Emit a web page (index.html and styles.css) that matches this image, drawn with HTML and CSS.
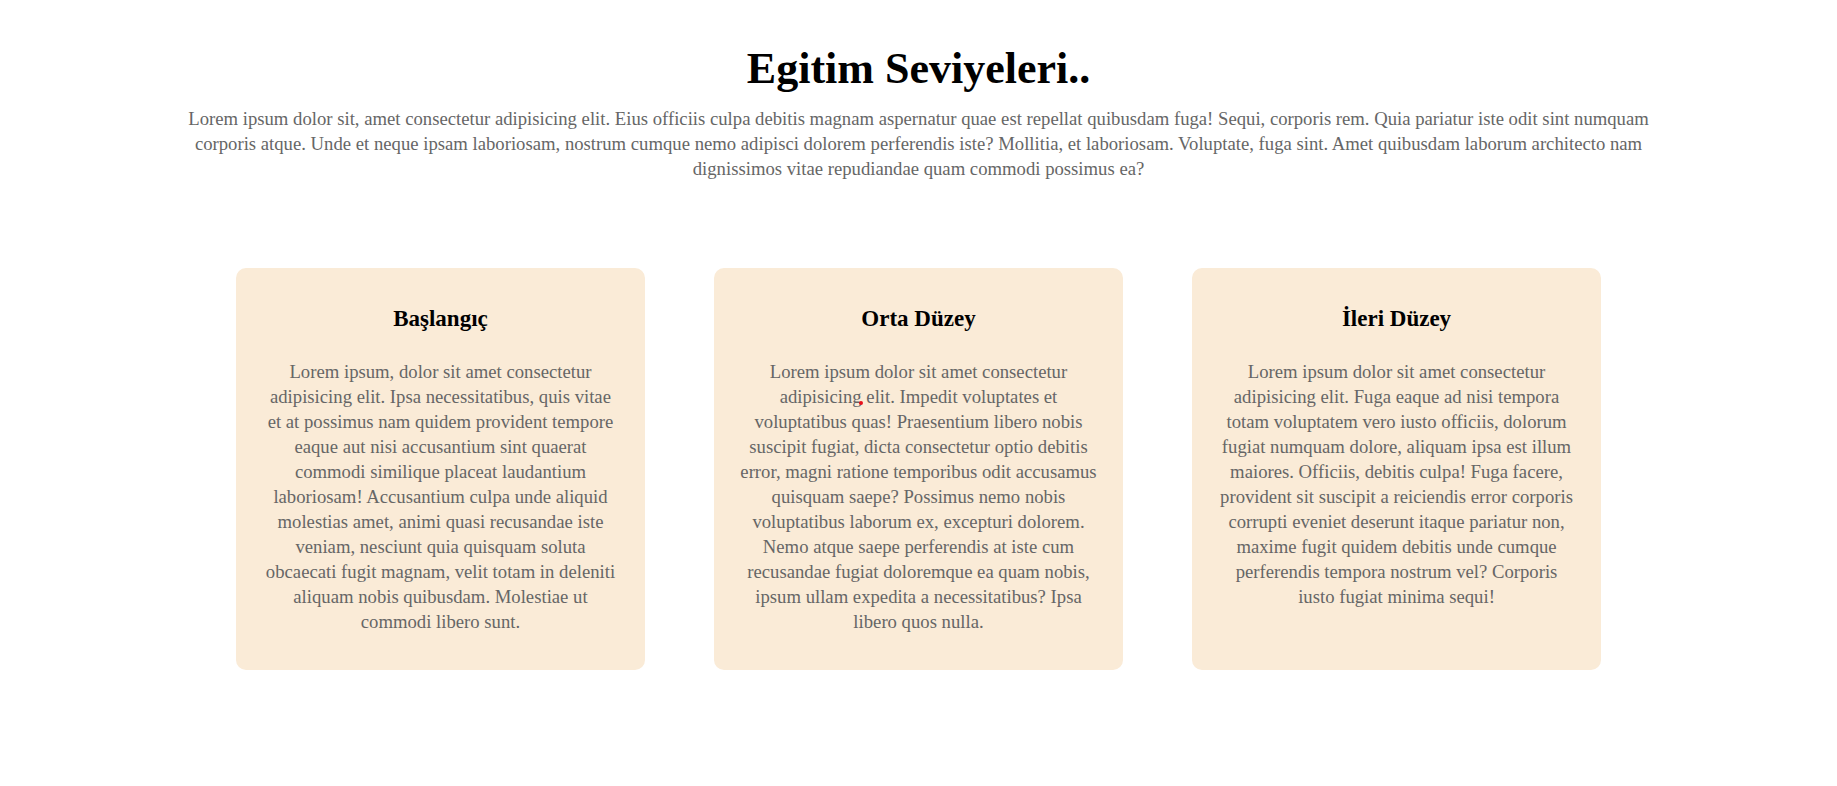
FILE: index.html
```html
<!DOCTYPE html>
<html lang="tr">
<head>
<meta charset="utf-8">
<title>Egitim Seviyeleri</title>
<link rel="stylesheet" href="styles.css">
</head>
<body>
<section class="intro">
  <h1 class="intro-title">Egitim Seviyeleri..</h1>
  <p class="intro-text">Lorem ipsum dolor sit, amet consectetur adipisicing elit. Eius officiis culpa debitis magnam aspernatur quae est repellat quibusdam fuga! Sequi, corporis rem. Quia pariatur iste odit sint numquam corporis atque. Unde et neque ipsam laboriosam, nostrum cumque nemo adipisci dolorem perferendis iste? Mollitia, et laboriosam. Voluptate, fuga sint. Amet quibusdam laborum architecto nam dignissimos vitae repudiandae quam commodi possimus ea?</p>
</section>
<section class="levels">
  <div class="card">
    <h2 class="card-title">Başlangıç</h2>
    <p class="card-text">Lorem ipsum, dolor sit amet consectetur adipisicing elit. Ipsa necessitatibus, quis vitae et at possimus nam quidem provident tempore eaque aut nisi accusantium sint quaerat commodi similique placeat laudantium laboriosam! Accusantium culpa unde aliquid molestias amet, animi quasi recusandae iste veniam, nesciunt quia quisquam soluta obcaecati fugit magnam, velit totam in deleniti aliquam nobis quibusdam. Molestiae ut commodi libero sunt.</p>
  </div>
  <div class="card card-marked">
    <h2 class="card-title">Orta Düzey</h2>
    <p class="card-text">Lorem ipsum dolor sit amet consectetur adipisicing elit. Impedit voluptates et voluptatibus quas! Praesentium libero nobis suscipit fugiat, dicta consectetur optio debitis error, magni ratione temporibus odit accusamus quisquam saepe? Possimus nemo nobis voluptatibus laborum ex, excepturi dolorem. Nemo atque saepe perferendis at iste cum recusandae fugiat doloremque ea quam nobis, ipsum ullam expedita a necessitatibus? Ipsa libero quos nulla.</p>
    <span class="cursor-dot"></span>
  </div>
  <div class="card">
    <h2 class="card-title">İleri Düzey</h2>
    <p class="card-text">Lorem ipsum dolor sit amet consectetur adipisicing elit. Fuga eaque ad nisi tempora totam voluptatem vero iusto officiis, dolorum fugiat numquam dolore, aliquam ipsa est illum maiores. Officiis, debitis culpa! Fuga facere, provident sit suscipit a reiciendis error corporis corrupti eveniet deserunt itaque pariatur non, maxime fugit quidem debitis unde cumque perferendis tempora nostrum vel? Corporis iusto fugiat minima sequi!</p>
  </div>
</section>
</body>
</html>
```

FILE: styles.css
```css
body {
  margin: 8px;
  font-family: "Liberation Serif", "Times New Roman", serif;
  background: #fff;
}

.intro {
  text-align: center;
  max-width: 1480px;
  margin: 0 auto;
}

.intro-title {
  font-size: 44px;
  font-weight: bold;
  color: #000;
  margin: 35px 0 12px;
}

.intro-text {
  font-size: 18.7px;
  line-height: 25px;
  color: #666;
  margin: 0;
}

.levels {
  width: 75%;
  margin: 87px auto 0;
  display: flex;
  justify-content: space-between;
}

.card {
  position: relative;
  width: 30%;
  box-sizing: border-box;
  background: #faebd7;
  border-radius: 10px;
  padding: 38px 25.5px 36px;
  text-align: center;
}

.card-title {
  font-size: 23px;
  color: #000;
  margin: 0 0 27px;
}

.card-text {
  font-size: 18.7px;
  line-height: 25px;
  color: #666;
  margin: 0;
}

.cursor-dot {
  position: absolute;
  left: 145px;
  top: 133px;
  width: 4px;
  height: 4px;
  border-radius: 50%;
  background: #e8101c;
}
```
